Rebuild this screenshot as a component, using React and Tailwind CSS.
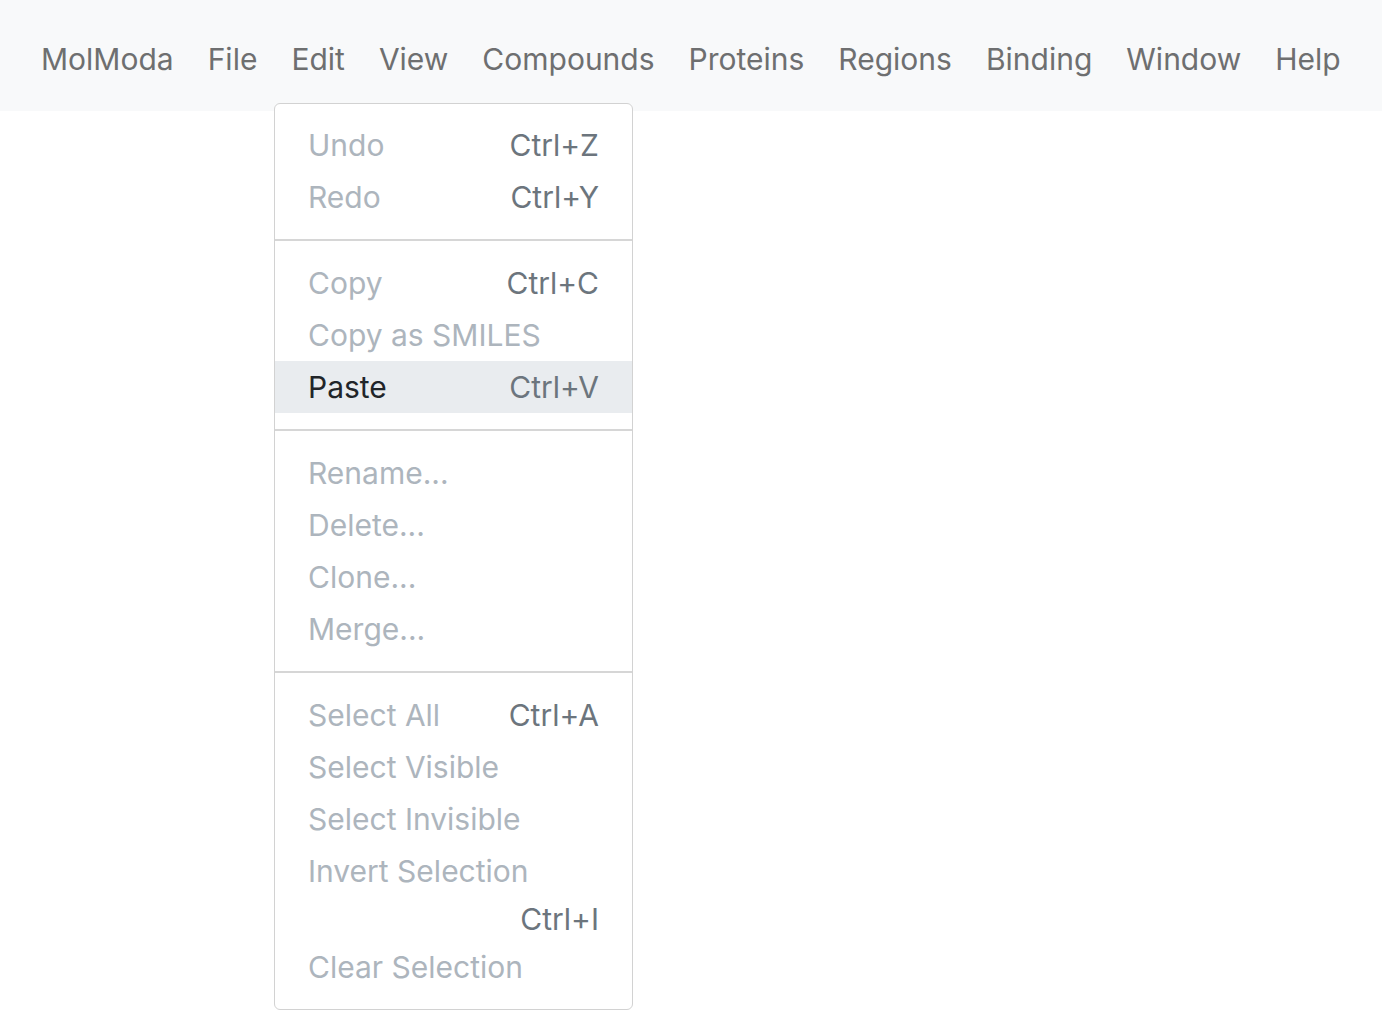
const NAV = ["File", "Edit", "View", "Compounds", "Proteins", "Regions", "Binding", "Window", "Help"];

const SECTIONS = [
  [
    { label: "Undo", key: "Ctrl+Z" },
    { label: "Redo", key: "Ctrl+Y" },
  ],
  [
    { label: "Copy", key: "Ctrl+C" },
    { label: "Copy as SMILES" },
    { label: "Paste", key: "Ctrl+V", active: true },
  ],
  [
    { label: "Rename..." },
    { label: "Delete..." },
    { label: "Clone..." },
    { label: "Merge..." },
  ],
  [
    { label: "Select All", key: "Ctrl+A" },
    { label: "Select Visible" },
    { label: "Select Invisible" },
    { label: "Invert Selection", key: "Ctrl+I", wrap: true },
    { label: "Clear Selection" },
  ],
];

function MenuItem({ item }) {
  if (item.wrap) {
    return (
      <div className="px-[33px] pt-2 pb-1">
        <div className="leading-[36px] text-[#adb5bd]">{item.label}</div>
        <div className="mt-3 text-right leading-[36px] text-[#6c757d]">{item.key}</div>
      </div>
    );
  }
  return (
    <div
      className={
        "flex items-center justify-between px-[33px] py-2 leading-[36px] " +
        (item.active ? "bg-[#e9ecef]" : "")
      }
    >
      <span className={item.active ? "text-[#212529]" : "text-[#adb5bd]"}>{item.label}</span>
      {item.key && <span className="text-[#6c757d]">{item.key}</span>}
    </div>
  );
}

export default function App() {
  return (
    <div
      className="relative min-h-screen bg-white text-[30px]"
      style={{ fontFamily: "Inter, 'Noto Sans', sans-serif" }}
    >
      <nav className="flex h-[111px] items-center gap-[34px] bg-[#f8f9fa] pt-[7px] pl-[41px] text-[#6e6f70]">
        <span>MolModa</span>
        {NAV.map((n) => (
          <span key={n}>{n}</span>
        ))}
      </nav>

      <div className="absolute left-[274px] top-[103px] w-[359px] rounded-[6px] border border-[#d2d2d2] bg-white pt-[15px] pb-4">
        {SECTIONS.map((sec, i) => (
          <div key={i}>
            {i > 0 && <div className="my-4 border-t-2 border-[#d6d6d6]" />}
            {sec.map((item) => (
              <MenuItem key={item.label} item={item} />
            ))}
          </div>
        ))}
      </div>
    </div>
  );
}
